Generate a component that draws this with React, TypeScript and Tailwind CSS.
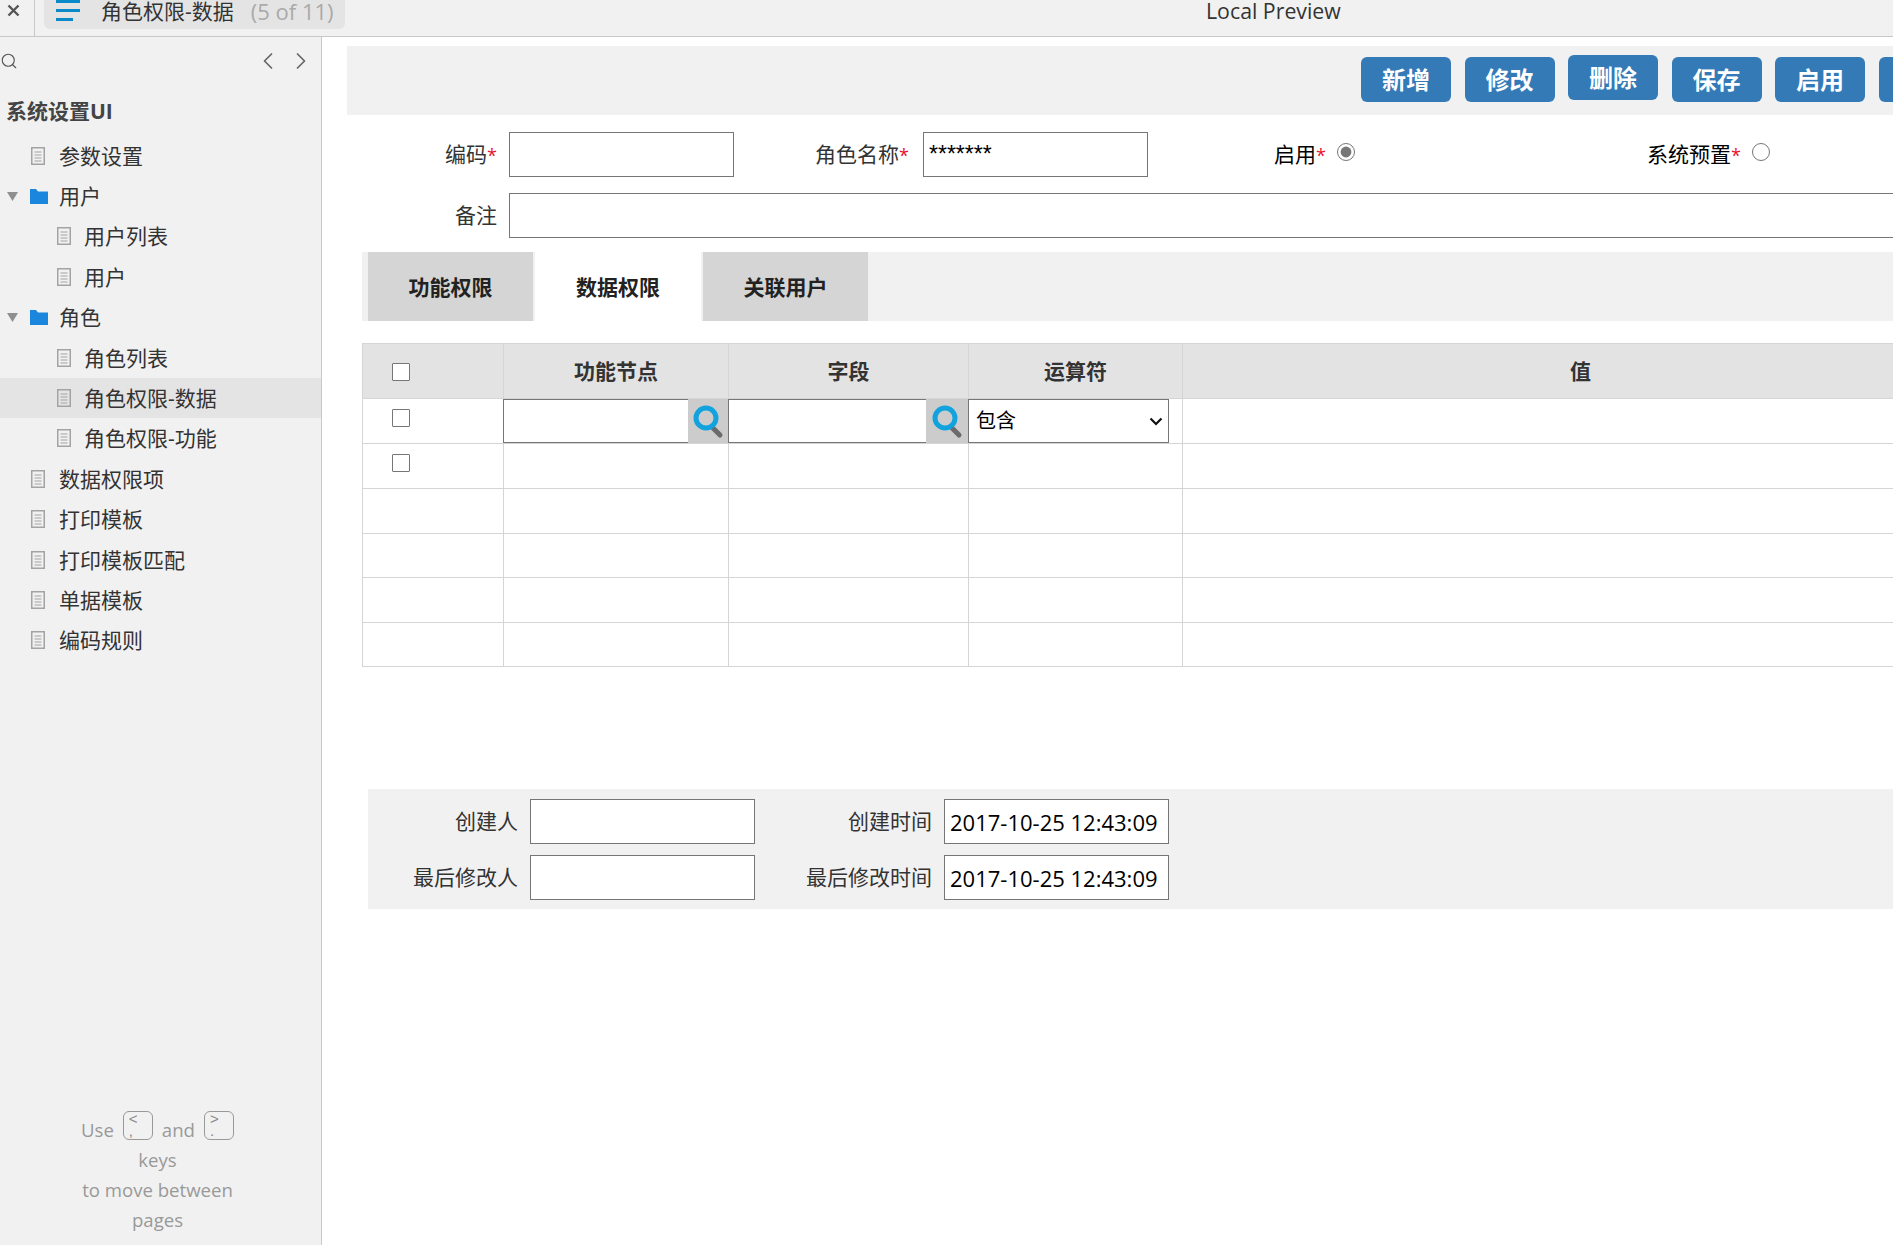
import { Search, ChevronLeft, ChevronRight } from "lucide-react";

const cjk = "font-['Open_Sans','Noto_Sans_CJK_SC',sans-serif]";

function DocIcon() {
  return (
    <svg width="14" height="18" viewBox="0 0 14 18" className="shrink-0">
      <rect x="0.75" y="0.75" width="12.5" height="16.5" fill="none" stroke="#a3a3a3" strokeWidth="1.5" />
      <path d="M3.5 5h7M3.5 8h7M3.5 11h7M3.5 14h7" stroke="#a3a3a3" strokeWidth="1.2" />
    </svg>
  );
}

function FolderIcon() {
  return (
    <svg width="18" height="16" viewBox="0 0 18 16" className="shrink-0">
      <path d="M0 1h6l2 2.5h10V16H0z" fill="#1a86dd" />
    </svg>
  );
}

function Caret() {
  return (
    <svg width="11" height="9" viewBox="0 0 11 9" className="shrink-0">
      <path d="M0 0h11L5.5 9z" fill="#8f8f8f" />
    </svg>
  );
}

function Magnifier() {
  return (
    <svg width="34" height="36" viewBox="0 0 34 36" className="shrink-0">
      <path d="M21 24l8 8" stroke="#6b6b6b" strokeWidth="5" strokeLinecap="round" />
      <circle cx="15" cy="15" r="10" fill="none" stroke="#12a3df" strokeWidth="5" />
    </svg>
  );
}

function Row({ label, depth, type, selected }: { label: string; depth: number; type: "doc" | "folder"; selected?: boolean }) {
  return (
    <div className={`flex h-[40.4px] items-center ${selected ? "bg-[#e4e4e4]" : ""}`}>
      {type === "folder" ? (
        <>
          <span className="ml-[7px] flex w-[23px]">
            <Caret />
          </span>
          <FolderIcon />
          <span className="ml-[11px]">{label}</span>
        </>
      ) : (
        <>
          <span className={depth === 0 ? "ml-[31px]" : "ml-[57px]"}>
            <DocIcon />
          </span>
          <span className={depth === 0 ? "ml-[14px]" : "ml-[13px]"}>{label}</span>
        </>
      )}
    </div>
  );
}

function Key({ top, bottom, className }: { top: string; bottom: string; className: string }) {
  return (
    <span className={`flex h-[29px] w-[30px] -translate-y-[5px] flex-col rounded-[6px] border-[1.5px] border-[#999] pl-[5px] font-['Liberation_Sans',sans-serif] text-[15px] leading-[12px] text-[#888] ${className}`}>
      <span className="mt-[1px] text-left">{top}</span>
      <span className="text-left">{bottom}</span>
    </span>
  );
}

function Btn({ children, up }: { children: string; up?: boolean }) {
  return (
    <button className={`h-[45px] w-[90px] shrink-0 rounded-[6px] bg-[#337ab7] text-[24px] leading-[45px] font-bold text-white ${up ? "-translate-y-[2px]" : ""}`}>
      {children}
    </button>
  );
}

function Field({ value, width, text }: { value?: string; width: string; text?: string }) {
  return (
    <input
      readOnly
      value={value ?? ""}
      className={`h-[45px] shrink-0 border border-[#767676] bg-white px-[5px] text-black outline-none ${text ?? "font-['Open_Sans','Noto_Sans_CJK_SC',sans-serif] text-[22px]"} ${width}`}
    />
  );
}

function Req() {
  return <span className="text-[18px] text-[#e8112d]">*</span>;
}

function Check() {
  return <span className="block h-[18px] w-[18px] rounded-[1px] border border-[#767676] bg-white" />;
}

export default function App() {
  const emptyRows = [0, 1, 2, 3];
  return (
    <div className={`flex h-[1245px] w-[1893px] flex-col overflow-hidden bg-white text-[21px] text-[#333] ${cjk}`}>
      <header className="flex h-[37px] shrink-0 border-b border-[#c8c8c8] bg-[#f1f1f1]">
        <div className="flex w-[35px] items-start border-r border-[#c8c8c8] pt-[2px] pl-[7px] text-[#555]">
          <svg width="13" height="13" viewBox="0 0 13 13" className="mt-[2px]">
            <path d="M1.5 1.5l10 10M11.5 1.5l-10 10" stroke="#555" strokeWidth="2.4" />
          </svg>
        </div>
        <div className="ml-[9px] flex h-[29px] w-[301px] items-start rounded-b-[6px] bg-[#e4e4e4] pl-[12px]">
          <div className="flex w-[45px] flex-col gap-[6px]">
            <span className="h-[3px] w-[24px] bg-[#0a8ac9]" />
            <span className="h-[3px] w-[24px] bg-[#0a8ac9]" />
            <span className="h-[3px] w-[17px] bg-[#0a8ac9]" />
          </div>
          <span className="leading-[22px] whitespace-nowrap">角色权限-数据</span>
          <span className="ml-[17px] text-[22px] leading-[22px] whitespace-nowrap text-[#aaa]">(5 of 11)</span>
        </div>
        <div className="ml-[861px] text-[21.3px] leading-[21px] whitespace-nowrap text-[#333]">Local Preview</div>
      </header>

      <div className="flex min-h-0 flex-1">
        <aside className="flex w-[322px] shrink-0 flex-col border-r border-[#c8c8c8] bg-[#f1f1f1]">
          <div className="flex h-[48px] shrink-0 items-center justify-between pr-[6px]">
            <Search size={18} strokeWidth={1.5} color="#555" />
            <div className="flex gap-[5px]">
              <ChevronLeft size={28} strokeWidth={1.5} color="#666" />
              <ChevronRight size={28} strokeWidth={1.5} color="#666" />
            </div>
          </div>
          <div className="flex h-[50.5px] shrink-0 items-center pt-[2px] pl-[6px] font-bold text-[#444]">系统设置UI</div>
          <nav className="leading-[30px]">
            <Row label="参数设置" depth={0} type="doc" />
            <Row label="用户" depth={0} type="folder" />
            <Row label="用户列表" depth={1} type="doc" />
            <Row label="用户" depth={1} type="doc" />
            <Row label="角色" depth={0} type="folder" />
            <Row label="角色列表" depth={1} type="doc" />
            <Row label="角色权限-数据" depth={1} type="doc" selected />
            <Row label="角色权限-功能" depth={1} type="doc" />
            <Row label="数据权限项" depth={0} type="doc" />
            <Row label="打印模板" depth={0} type="doc" />
            <Row label="打印模板匹配" depth={0} type="doc" />
            <Row label="单据模板" depth={0} type="doc" />
            <Row label="编码规则" depth={0} type="doc" />
          </nav>
          <div className="mt-auto pr-[6px] pb-[10px] text-center text-[18.6px] leading-[30px] text-[#999]">
            <div className="flex h-[30px] items-center justify-center">
              <span>Use</span>
              <Key top="<" bottom="," className="mx-[9px]" />
              <span>and</span>
              <Key top=">" bottom="." className="ml-[9px]" />
            </div>
            <div>keys</div>
            <div>to move between</div>
            <div>pages</div>
          </div>
        </aside>

        <main className="min-w-0 flex-1 overflow-hidden pt-[9px] pl-[25px]">
          <div className="flex h-[69px] gap-[13.5px] bg-[#f1f1f1] pt-[11px] pl-[1014px]">
            <Btn>新增</Btn>
            <Btn>修改</Btn>
            <Btn up>删除</Btn>
            <Btn>保存</Btn>
            <Btn>启用</Btn>
            <Btn> </Btn>
          </div>

          <div className="mt-[17px] flex h-[45px] items-center">
            <label className="mr-[12px] w-[150px] shrink-0 text-right">
              编码<Req />
            </label>
            <Field width="w-[225px]" />
            <label className="mr-[14px] w-[175px] shrink-0 text-right">
              角色名称<Req />
            </label>
            <Field width="w-[225px]" value="*******" text="font-['Liberation_Sans',sans-serif] text-[23px]" />
            <label className="w-[178px] shrink-0 text-right text-black">
              启用<Req />
            </label>
            <input type="radio" readOnly checked className="mb-[6px] ml-[11px] h-[18px] w-[18px] shrink-0 accent-[#777]" />
            <label className="w-[386px] shrink-0 text-right text-black">
              系统预置<Req />
            </label>
            <input type="radio" readOnly checked={false} className="mb-[6px] ml-[11px] h-[18px] w-[18px] shrink-0 accent-[#777]" />
          </div>

          <div className="mt-[16px] flex h-[45px] items-center">
            <label className="mr-[12px] w-[150px] shrink-0 text-right">备注</label>
            <Field width="w-[1500px]" />
          </div>

          <div className="mt-[14px] ml-[15px] flex h-[69px] bg-[#f1f1f1] pl-[6px] font-bold text-[#222]">
            <div className="flex w-[165px] items-center justify-center bg-[#d5d5d5] pt-[2px]">功能权限</div>
            <div className="ml-[2px] flex w-[166px] items-center justify-center bg-white pt-[2px]">数据权限</div>
            <div className="ml-[2px] flex w-[165px] items-center justify-center bg-[#d5d5d5] pt-[2px]">关联用户</div>
          </div>

          <table className="mt-[22px] ml-[15px] w-[1616px] table-fixed border-collapse">
            <colgroup>
              <col className="w-[141px]" />
              <col className="w-[225px]" />
              <col className="w-[240px]" />
              <col className="w-[214px]" />
              <col className="w-[796px]" />
            </colgroup>
            <thead>
              <tr className="h-[55px] bg-[#e3e3e3] font-bold">
                <th className="border border-[#d5d5d5] pt-[1px] pl-[29px]">
                  <Check />
                </th>
                <th className="border border-[#d5d5d5] pt-[2px] text-center">功能节点</th>
                <th className="border border-[#d5d5d5] pt-[2px] text-center">字段</th>
                <th className="border border-[#d5d5d5] pt-[2px] text-center">运算符</th>
                <th className="border border-[#d5d5d5] pt-[2px] text-center">值</th>
              </tr>
            </thead>
            <tbody>
              <tr className="h-[45px]">
                <td className="border border-[#d5d5d5] pb-[6px] pl-[29px]">
                  <Check />
                </td>
                <td className="border border-[#d5d5d5] p-0">
                  <div className="-ml-[1px] flex h-[44px]">
                    <input readOnly value="" className="h-[44px] w-[185px] border-y border-l border-[#767676] bg-white outline-none" />
                    <span className="flex w-[40px] items-center justify-center bg-[#cccccc]">
                      <Magnifier />
                    </span>
                  </div>
                </td>
                <td className="border border-[#d5d5d5] p-0">
                  <div className="-ml-[1px] flex h-[44px]">
                    <input readOnly value="" className="h-[44px] w-[198px] border-y border-l border-[#767676] bg-white outline-none" />
                    <span className="flex w-[42px] items-center justify-center bg-[#cccccc]">
                      <Magnifier />
                    </span>
                  </div>
                </td>
                <td className="border border-[#d5d5d5] p-0">
                  <div className="relative -ml-[1px] h-[44px] w-[201px]">
                    <select defaultValue="包含" className="block h-[44px] w-[201px] appearance-none rounded-none border border-[#767676] bg-white pl-[7px] text-[20px] text-black outline-none">
                      <option>包含</option>
                    </select>
                    <svg width="14" height="9" viewBox="0 0 14 9" className="pointer-events-none absolute top-[18px] right-[6px]">
                      <path d="M1.5 1.5L7 7l5.5-5.5" fill="none" stroke="#111" strokeWidth="2.2" />
                    </svg>
                  </div>
                </td>
                <td className="border border-[#d5d5d5]" />
              </tr>
              <tr className="h-[45px]">
                <td className="border border-[#d5d5d5] pb-[7px] pl-[29px]">
                  <Check />
                </td>
                <td className="border border-[#d5d5d5]" />
                <td className="border border-[#d5d5d5]" />
                <td className="border border-[#d5d5d5]" />
                <td className="border border-[#d5d5d5]" />
              </tr>
              {emptyRows.map((r) => (
                <tr key={r} className="h-[44.5px]">
                  <td className="border border-[#d5d5d5]" />
                  <td className="border border-[#d5d5d5]" />
                  <td className="border border-[#d5d5d5]" />
                  <td className="border border-[#d5d5d5]" />
                  <td className="border border-[#d5d5d5]" />
                </tr>
              ))}
            </tbody>
          </table>

          <div className="mt-[122px] ml-[21px] flex h-[120px] flex-col gap-[11px] bg-[#f1f1f1] pt-[10px]">
            <div className="flex h-[45px] items-center">
              <label className="mr-[12px] w-[150px] shrink-0 text-right">创建人</label>
              <Field width="w-[225px]" />
              <label className="mr-[12px] w-[177px] shrink-0 text-right">创建时间</label>
              <Field width="w-[225px]" value="2017-10-25 12:43:09" />
            </div>
            <div className="flex h-[45px] items-center">
              <label className="mr-[12px] w-[150px] shrink-0 text-right">最后修改人</label>
              <Field width="w-[225px]" />
              <label className="mr-[12px] w-[177px] shrink-0 text-right">最后修改时间</label>
              <Field width="w-[225px]" value="2017-10-25 12:43:09" />
            </div>
          </div>
        </main>
      </div>
    </div>
  );
}
